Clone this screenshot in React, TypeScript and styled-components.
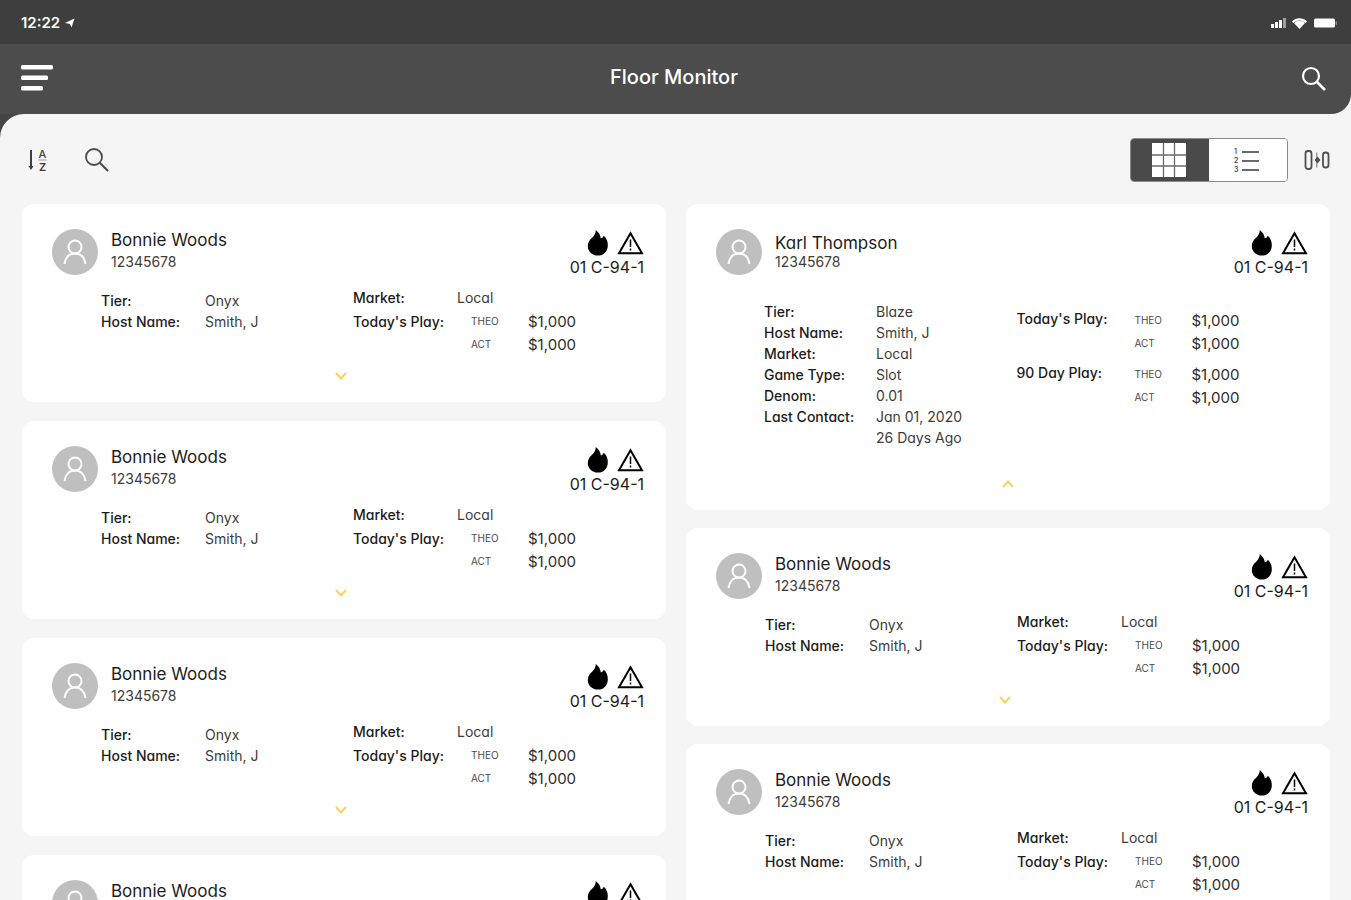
import React from "react";
import styled, { createGlobalStyle } from "styled-components";

const GlobalStyle = createGlobalStyle`
  * { box-sizing: border-box; }
  html { scrollbar-width: none; background: #f5f5f5; }
  body {
    margin: 0;
    background: #f5f5f5;
    color: #1c1c1c;
    font-family: Inter, "Open Sans", sans-serif;
    font-feature-settings: "cv11";
    -webkit-font-smoothing: antialiased;
  }
  h1, h2, p, dl, dd, dt { margin: 0; font-weight: 400; }
  button { font: inherit; color: inherit; border: 0; padding: 0; background: none; cursor: pointer; }
  svg { display: block; }
`;

const StatusBar = styled.div`
  display: flex;
  justify-content: space-between;
  align-items: center;
  height: 44px;
  padding: 2px 14px 0 21px;
  background: #3e3e3e;
  color: #fff;
`;

const Clock = styled.div`
  display: flex;
  align-items: center;
  gap: 5px;
  font-size: 15px;
  line-height: 20px;
  font-weight: 600;
`;

const Signals = styled.div`
  display: flex;
  align-items: center;
  gap: 6px;
`;

const HeaderBack = styled.div`
  background: #f5f5f5;
`;

const Header = styled.header`
  display: grid;
  grid-template-columns: 1fr auto 1fr;
  align-items: center;
  height: 70px;
  padding: 0 24px 0 21px;
  border-radius: 0 0 20px 0;
  background: #4c4c4c;
  color: #fff;
`;

const Title = styled.h1`
  padding-bottom: 5px;
  font-size: 20px;
  line-height: 24px;
  font-weight: 500;
`;

const IconButton = styled.button<{ $end?: boolean }>`
  display: grid;
  place-items: center;
  justify-self: ${(p) => (p.$end ? "end" : "start")};
`;

const MainBack = styled.div`
  background: #454545;
`;

const Main = styled.main`
  padding: 0 21px 19px 22px;
  border-radius: 24px 0 0 0;
  background: #f5f5f5;
`;

const Toolbar = styled.div`
  display: flex;
  align-items: center;
  justify-content: space-between;
  height: 90px;
  padding: 2px 0 0 5px;
`;

const ToolGroup = styled.div<{ $gap: number }>`
  display: flex;
  align-items: center;
  gap: ${(p) => p.$gap}px;
`;

const Toggle = styled.div`
  display: flex;
  width: 158px;
  height: 44px;
  overflow: hidden;
  border: 1px solid #8a8a8a;
  border-radius: 4px;
  background: #fff;
`;

const ToggleButton = styled.button<{ $active?: boolean }>`
  display: grid;
  place-items: center;
  flex: 1;
  padding-right: 3px;
  background: ${(p) => (p.$active ? "#4a4a4a" : "#fff")};
`;

const Columns = styled.div`
  display: grid;
  grid-template-columns: repeat(2, minmax(0, 1fr));
  gap: 20px;
  align-items: start;
`;

const Column = styled.div<{ $gap: number }>`
  display: flex;
  flex-direction: column;
  gap: ${(p) => p.$gap}px;
`;

const Card = styled.article`
  display: flex;
  flex-direction: column;
  padding: 25px 0 16px;
  border-radius: 12px;
  background: #fff;
`;

const CardHead = styled.div`
  display: flex;
  align-items: flex-start;
  gap: 13px;
  padding: 0 22px 0 30px;
`;

const Avatar = styled.div`
  display: grid;
  place-items: center;
  width: 46px;
  height: 46px;
  border-radius: 50%;
  background: #bfbfbf;
`;

const Identity = styled.div<{ $tight: boolean }>`
  flex: 1;
  padding-top: ${(p) => (p.$tight ? 4 : 1)}px;
  line-height: ${(p) => (p.$tight ? 16 : 21)}px;
`;

const Name = styled.h2`
  font-size: 17px;
  line-height: 21px;
`;

const PlayerId = styled.p`
  font-size: 14px;
  line-height: inherit;
  color: #3c3c3c;
`;

const Flags = styled.div`
  display: flex;
  flex-direction: column;
  align-items: flex-end;
`;

const FlagIcons = styled.div`
  display: flex;
  align-items: center;
  gap: 8px;
  height: 28px;
`;

const Seat = styled.p`
  font-size: 16px;
  line-height: 21px;
`;

const Details = styled.div<{ $open: boolean }>`
  display: grid;
  grid-template-columns: minmax(0, 252fr) minmax(0, 313fr);
  padding: ${(p) => (p.$open ? "23px 0 26px 78px" : "8px 0 10px 79px")};
`;

const Facts = styled.dl<{ $open: boolean }>`
  display: grid;
  grid-template-columns: ${(p) => (p.$open ? 112 : 104)}px 1fr;
  align-content: start;
  padding-top: ${(p) => (p.$open ? 0 : 4)}px;
  font-size: 14px;
  line-height: 21px;
`;

const Term = styled.dt`
  font-weight: 500;
`;

const Value = styled.dd`
  white-space: pre-line;
  color: #3c3c3c;
`;

const Plays = styled.div<{ $open: boolean }>`
  display: flex;
  flex-direction: column;
  gap: ${(p) => (p.$open ? 8 : 0)}px;
  padding-top: ${(p) => (p.$open ? 8 : 0)}px;
  font-size: 14px;
  line-height: 23px;
`;

const MarketRow = styled.dl`
  display: grid;
  grid-template-columns: 104px 1fr;
  line-height: 24px;
`;

const PlayRow = styled.dl<{ $raised: boolean }>`
  display: grid;
  grid-template-columns: 118px 1fr;

  dt {
    line-height: ${(p) => (p.$raised ? 20 : 23)}px;
  }
`;

const Amounts = styled.dd`
  display: grid;
  grid-template-columns: 57px 1fr;
`;

const Kind = styled.span`
  font-size: 10px;
  color: #4a4a4a;
`;

const Amount = styled.span`
  font-size: 15px;
  color: #2c2c2c;
`;

const Expander = styled.button<{ $open: boolean }>`
  display: grid;
  place-items: center;
  width: 40px;
  height: 20px;
  align-self: center;
  margin-right: ${(p) => (p.$open ? 0 : 6)}px;
`;

const SearchIcon = ({ color, width }: { color: string; width: number }) => (
  <svg width="26" height="26" viewBox="0 0 26 26" fill="none" stroke={color} strokeWidth={width}>
    <circle cx="10" cy="10" r="8" />
    <path d="M16 16l8 8" strokeWidth={width + 0.4} />
  </svg>
);

const MenuIcon = () => (
  <svg width="32" height="28" viewBox="0 0 32 28" fill="#fff">
    <rect width="32" height="4.500" rx="1.500" />
    <rect y="10.500" width="27" height="4.500" rx="1.500" />
    <rect y="21" width="22" height="4.500" rx="1.500" />
  </svg>
);

const SortIcon = () => (
  <svg width="22" height="26" viewBox="0 0 22 26">
    <path d="M4 3v17" fill="none" stroke="#3f3f3f" strokeWidth="2" />
    <path d="M1.500 19H6.500L4 23Z" fill="#3f3f3f" />
    <text x="15.500" y="11" textAnchor="middle" fontSize="11" fontWeight="500" fill="#3f3f3f">A</text>
    <path d="M11.500 13H19.500" stroke="#9a9a9a" strokeWidth="1" />
    <text x="15.500" y="24" textAnchor="middle" fontSize="11" fontWeight="600" fill="#3f3f3f">Z</text>
  </svg>
);

const GridIcon = () => (
  <svg width="34" height="34" viewBox="0 0 34 34">
    <rect width="34" height="34" fill="#fff" />
    <path d="M0 12H34M0 23H34M11.500 0V34M22.500 0V34" stroke="#6a6a6a" strokeWidth="1.300" />
  </svg>
);

const ListIcon = () => (
  <svg width="26" height="26" viewBox="0 0 26 26">
    <path d="M8 5H25M8 14H25M8 23H25" stroke="#6a6a6a" strokeWidth="2" />
    <g fontSize="7" fontWeight="600" fill="#4a4a4a">
      <text x="0" y="7">1</text>
      <text x="0" y="16">2</text>
      <text x="0" y="25">3</text>
    </g>
  </svg>
);

const FilterIcon = () => (
  <svg width="26" height="22" viewBox="0 0 26 22" fill="none" stroke="#4f4f4f" strokeWidth="1.800">
    <rect x="1.500" y="2" width="6" height="18" rx="2.500" />
    <path d="M12.800 3.500V18.500" stroke="#8a8a8a" strokeWidth="1.200" />
    <path d="M10.500 11L13.500 7.500L16.500 11L13.500 14.500Z" fill="#4f4f4f" stroke="none" />
    <rect x="19" y="3.500" width="5.500" height="15" rx="2.500" />
  </svg>
);

const PersonIcon = () => (
  <svg width="26" height="26" viewBox="0 0 26 26" fill="none" stroke="#fff" strokeWidth="2">
    <circle cx="13" cy="8" r="6.500" />
    <path d="M2.500 25C3.500 18.500 7 14.500 13 14.500S22.500 18.500 23.500 25" />
  </svg>
);

const FlameIcon = () => (
  <svg width="22" height="28" viewBox="0 0 22 28" fill="#000">
    <path d="M8.800 1C12 3.600 13.600 6.500 13.800 9.600C15.300 9 16.300 8 16.800 6.800C19.800 9.500 20.800 12.700 20.800 16.200C20.800 22.400 16.800 26.600 10.900 26.600S.8 22.400 .8 17C.8 13 2.700 10.600 5.300 8.400C7.400 6.500 8.700 4.300 8.800 1Z" />
  </svg>
);

const WarningIcon = () => (
  <svg width="27" height="24" viewBox="0 0 27 24" fill="none" stroke="#000" strokeWidth="2">
    <path d="M13.500 2.200L25 22.300H2Z" />
    <path d="M13.500 8.500V16M13.500 17.500V19.500" strokeWidth="1.500" />
  </svg>
);

const Chevron = ({ up }: { up: boolean }) => (
  <svg width="14" height="10" viewBox="0 0 14 10" fill="none" stroke="#fbd25c" strokeWidth="2">
    <path d={up ? "M2 8L7 2.500 12 8" : "M2 2L7 7.500 12 2"} />
  </svg>
);

type Play = { label: string; theo: string; act: string };
type Player = {
  name: string;
  id: string;
  seat: string;
  open: boolean;
  facts: [string, string][];
  market?: string;
  plays: Play[];
};

const bonnie: Player = {
  name: "Bonnie Woods",
  id: "12345678",
  seat: "01 C-94-1",
  open: false,
  facts: [["Tier:", "Onyx"], ["Host Name:", "Smith, J"]],
  market: "Local",
  plays: [{ label: "Today's Play:", theo: "$1,000", act: "$1,000" }],
};

const karl: Player = {
  name: "Karl Thompson",
  id: "12345678",
  seat: "01 C-94-1",
  open: true,
  facts: [
    ["Tier:", "Blaze"],
    ["Host Name:", "Smith, J"],
    ["Market:", "Local"],
    ["Game Type:", "Slot"],
    ["Denom:", "0.01"],
    ["Last Contact:", "Jan 01, 2020\n26 Days Ago"],
  ],
  plays: [
    { label: "Today's Play:", theo: "$1,000", act: "$1,000" },
    { label: "90 Day Play:", theo: "$1,000", act: "$1,000" },
  ],
};

const PlayerCard = ({ player }: { player: Player }) => (
  <Card>
    <CardHead>
      <Avatar><PersonIcon /></Avatar>
      <Identity $tight={player.open}>
        <Name>{player.name}</Name>
        <PlayerId>{player.id}</PlayerId>
      </Identity>
      <Flags>
        <FlagIcons>
          <FlameIcon />
          <WarningIcon />
        </FlagIcons>
        <Seat>{player.seat}</Seat>
      </Flags>
    </CardHead>
    <Details $open={player.open}>
      <Facts $open={player.open}>
        {player.facts.map(([term, value]) => (
          <React.Fragment key={term}>
            <Term>{term}</Term>
            <Value>{value}</Value>
          </React.Fragment>
        ))}
      </Facts>
      <Plays $open={player.open}>
        {player.market && (
          <MarketRow>
            <Term>Market:</Term>
            <Value>{player.market}</Value>
          </MarketRow>
        )}
        {player.plays.map((play) => (
          <PlayRow key={play.label} $raised={player.open}>
            <Term>{play.label}</Term>
            <Amounts>
              <Kind>THEO</Kind>
              <Amount>{play.theo}</Amount>
              <Kind>ACT</Kind>
              <Amount>{play.act}</Amount>
            </Amounts>
          </PlayRow>
        ))}
      </Plays>
    </Details>
    <Expander $open={player.open} aria-expanded={player.open} aria-label="Player details">
      <Chevron up={player.open} />
    </Expander>
  </Card>
);

const left = [bonnie, bonnie, bonnie, bonnie];
const right = [karl, bonnie, bonnie];

export default function App() {
  return (
    <>
      <GlobalStyle />
      <StatusBar>
        <Clock>
          12:22
          <svg width="10" height="10" viewBox="0 0 10 10" fill="#fff">
            <path d="M9.500 .5L6.500 9.500 5 6 0 5Z" />
          </svg>
        </Clock>
        <Signals>
          <svg width="15" height="10" viewBox="0 0 15 10" fill="#fff">
            <rect y="6" width="3" height="4" />
            <rect x="4" y="4" width="3" height="6" />
            <rect x="8" y="2" width="3" height="8" />
            <rect x="12" width="3" height="10" opacity=".5" />
          </svg>
          <svg width="15" height="11" viewBox="0 0 15 11" fill="#fff">
            <path d="M0 3.500C4-.8 11-.8 15 3.500L13.500 5C10 1.600 5 1.600 1.500 5Z" />
            <path d="M2 5C5.500 2 9.500 2 13 5L7.500 11Z" />
          </svg>
          <svg width="24" height="10" viewBox="0 0 24 10" fill="#fff">
            <rect x="1" y=".5" width="21" height="9" rx="1.500" />
            <rect x="22.500" y="3" width="1.500" height="4" rx=".7" opacity=".4" />
          </svg>
        </Signals>
      </StatusBar>
      <HeaderBack>
        <Header>
          <IconButton aria-label="Menu"><MenuIcon /></IconButton>
          <Title>Floor Monitor</Title>
          <IconButton $end aria-label="Search"><SearchIcon color="#fff" width={2.2} /></IconButton>
        </Header>
      </HeaderBack>
      <MainBack>
        <Main>
          <Toolbar>
            <ToolGroup $gap={35}>
              <IconButton aria-label="Sort"><SortIcon /></IconButton>
              <IconButton aria-label="Search players"><SearchIcon color="#4a4a4a" width={1.8} /></IconButton>
            </ToolGroup>
            <ToolGroup $gap={16}>
              <Toggle>
                <ToggleButton $active aria-label="Grid view" aria-pressed="true"><GridIcon /></ToggleButton>
                <ToggleButton aria-label="List view" aria-pressed="false"><ListIcon /></ToggleButton>
              </Toggle>
              <IconButton aria-label="Filters"><FilterIcon /></IconButton>
            </ToolGroup>
          </Toolbar>
          <Columns>
            <Column $gap={19}>
              {left.map((player, i) => <PlayerCard key={i} player={player} />)}
            </Column>
            <Column $gap={18}>
              {right.map((player, i) => <PlayerCard key={i} player={player} />)}
            </Column>
          </Columns>
        </Main>
      </MainBack>
    </>
  );
}
